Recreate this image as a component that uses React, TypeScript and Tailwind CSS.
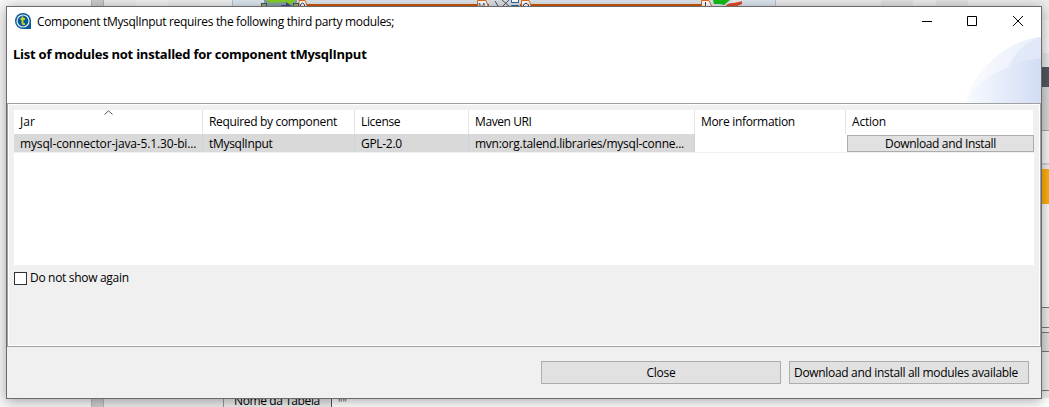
import type { ReactNode } from 'react';

function Backdrop() {
  return (
    <div className="absolute inset-0 flex bg-[#f3f3f3]">
      <div className="w-[91px] bg-[#f7f7f7]" />
      <div className="w-[13px] border-x border-[#b5b5b5] bg-[#cdcdcd]" />
      <div className="flex-1 bg-[#ececec]" />
      <svg className="absolute inset-0" width="1049" height="407" viewBox="0 0 1049 407" shapeRendering="crispEdges">
        <rect x="136" width="32" height="6" fill="#f1f1f1" />
        <rect x="200" width="32" height="6" fill="#f1f1f1" />
        <rect x="232" width="544" height="7" fill="#dde7ef" />
        <rect x="232" width="1" height="7" fill="#a9c4d8" />
        <rect x="775" width="1" height="7" fill="#b9c6d2" />
        <g shapeRendering="auto">
          <path d="M264 0H297V7H264Z" fill="#86a3ac" />
          <path d="M266 0H296L290 5L286 2L270 3Z" fill="#85cf24" />
          <path d="M281 5H286V2L293 7H281Z" fill="#494985" />
          <path d="M299 .5H305L307.500 7H299Z" fill="#fff" stroke="#df6d18" />
          <path d="M300.500 7V4.500Q302.500 1.500 304.500 4.500V7" fill="none" stroke="#333a66" />
        </g>
        <rect x="261.500" y="3.500" width="5" height="4" fill="#8bb27c" stroke="#555" />
        <rect x="293.500" y="3.500" width="5" height="4" fill="#8bb27c" stroke="#555" />
        <rect x="307" y="4" width="395" height="2" fill="#cf570b" />
        <g shapeRendering="auto">
          <rect x="489" width="31" height="7" fill="#d9e1e8" />
          <path d="M477.500 7V.5H486L488.500 7" fill="#fff" stroke="#df6d18" />
          <text x="478" y="8" fontSize="8" fill="#28365c" fontFamily="Open Sans, sans-serif">M</text>
          <path d="M495 1L498 6M502 0L510 7M509 0L502 7" stroke="#555" fill="none" />
          <path d="M511.500 0V2.500H518.500V0M511.500 7V5.500H518.500V7" stroke="#2d659d" fill="#fff" />
          <path d="M521.500 7V.5H529L531.500 7" fill="#fff" stroke="#df6d18" />
          <path d="M523.500 7V5Q526 1.500 528.500 5V7" fill="none" stroke="#333a66" />
          <path d="M701.500 7V.5H709L712 7" fill="#fff" stroke="#df6d18" />
          <path d="M705.500 2V7" stroke="#444" />
          <path d="M713 0H730L724 5L720 4L714 4Z" fill="#14bd18" />
          <path d="M725 7Q727 3 733 3L742 1V4Q738 6 733 7Z" fill="#e04a2f" />
          <path d="M733 0H742V1L733 3H729Z" fill="#eee" />
        </g>
        <rect x="881" width="32" height="6" fill="#e2e2e2" />
        <rect x="936" width="32" height="6" fill="#e2e2e2" />
        <rect x="1041" y="20" width="8" height="33" fill="#f3f3f3" />
        <rect x="1041" y="53" width="8" height="14" fill="#e7e7e7" />
        <rect x="1041" y="67" width="8" height="20" fill="#54575f" />
        <rect x="1041" y="87" width="8" height="43" fill="#d6d6d6" />
        <rect x="1041" y="130" width="8" height="1" fill="#aaa" />
        <rect x="1041" y="131" width="8" height="32" fill="#f5f5f5" />
        <rect x="1041" y="163" width="8" height="2" fill="#cbd0dc" />
        <rect x="1041" y="169" width="8" height="35" fill="#ffae0d" />
        <rect x="1041" y="204" width="8" height="103" fill="#f8f8f8" />
        <rect x="1041" y="307" width="8" height="1" fill="#777" />
        <rect x="1041" y="327" width="8" height="1" fill="#777" />
        <rect x="1041" y="332" width="8" height="1" fill="#777" />
        <rect x="1041" y="333" width="8" height="18" fill="#dedede" />
        <rect x="1041" y="351" width="8" height="1" fill="#777" />
        <rect x="1041" y="390" width="8" height="1" fill="#777" />
        <rect x="223" y="398" width="1" height="9" fill="#999" />
        <rect x="331" y="398" width="1" height="9" fill="#555" />
        <rect x="332" y="398" width="717" height="9" fill="#fff" />
      </svg>
      <div className="absolute left-[234px] top-[393px] h-[14px] whitespace-nowrap text-[12px] leading-4 tracking-[-0.4px]">Nome da Tabela</div>
      <div className="absolute left-[338px] top-[395px] h-3 text-[11px] leading-4 text-[#555]">""</div>
    </div>
  );
}

function TitleBar() {
  return (
    <div className="flex h-[29px] shrink-0 items-center bg-white pl-2">
      <svg width="16" height="16" viewBox="0 0 16 16" className="-mt-px">
        <path d="M8 0A8 8 0 0 1 16 8V16H8A8 8 0 0 1 8 0Z" fill="#075a97" />
        <circle cx="8" cy="8" r="6" fill="none" stroke="#e6eff5" strokeWidth="1.200" />
        <path d="M7.500 3.500V10Q7.500 11.500 10 11M5.500 6H10" stroke="#c6d420" strokeWidth="1.900" fill="none" />
      </svg>
      <span className="ml-[6px] whitespace-nowrap tracking-[-0.33px]">Component tMysqlInput requires the following third party modules;</span>
      <svg className="ml-auto mr-[17px]" width="103" height="29" viewBox="0 0 103 29" fill="none" stroke="#000">
        <path d="M1 14.500H11" />
        <path d="M46.500 9.500H55.500V18.500H46.500Z" />
        <path d="M92 9L102 19M102 9L92 19" />
      </svg>
    </div>
  );
}

function Banner() {
  return (
    <div className="flex h-[67px] shrink-0 justify-between bg-white pl-[6px]">
      <h1 className="mt-[10px] whitespace-nowrap text-[13px] font-bold leading-4 tracking-[-0.24px]">List of modules not installed for component tMysqlInput</h1>
      <svg width="76" height="67" viewBox="0 0 76 67">
        <defs>
          <linearGradient id="outer"><stop offset="0" stopColor="#fafbfe" /><stop offset="1" stopColor="#e9eefa" /></linearGradient>
          <linearGradient id="inner"><stop offset="0" stopColor="#f8faff" /><stop offset="1" stopColor="#d2ddf4" /></linearGradient>
        </defs>
        <path d="M1 67C4 42 38 4 76 1V67Z" fill="url(#outer)" />
        <path d="M42 33C49 18 59 6 76 1V30Z" fill="#dfe7f8" opacity=".8" />
        <path d="M1 67C8 48 36 28 76 22V67Z" fill="url(#inner)" />
      </svg>
    </div>
  );
}

function HeaderCell({ children, last = false }: { children: ReactNode; last?: boolean }) {
  return (
    <div className={`relative flex items-center whitespace-nowrap border-r pl-[6px] ${last ? 'border-[#f0f0f0]' : 'border-[#e5e5e5]'}`}>
      {children}
    </div>
  );
}

function Cell({ children }: { children: ReactNode }) {
  return <div className="flex items-center whitespace-nowrap border-r border-[#ccd3d9] bg-[#d9d9d9] pl-[6px] pt-px">{children}</div>;
}

function ModulesTable() {
  return (
    <div className="h-[155px] bg-white">
      <div className="grid h-6 grid-cols-[189px_152px_114px_226px_151px_188px]">
        <HeaderCell>
          <span>Jar</span>
          <svg className="absolute left-[90px] top-0" width="9" height="5" viewBox="0 0 9 5" fill="none" stroke="#555">
            <path d="M.5 4.500L4.500 .8L8.500 4.500" />
          </svg>
        </HeaderCell>
        <HeaderCell><span className="tracking-[-0.33px]">Required by component</span></HeaderCell>
        <HeaderCell><span className="tracking-[-0.35px]">License</span></HeaderCell>
        <HeaderCell><span className="tracking-[-0.4px]">Maven URI</span></HeaderCell>
        <HeaderCell><span className="tracking-[-0.32px]">More information</span></HeaderCell>
        <HeaderCell last><span className="tracking-[-0.2px]">Action</span></HeaderCell>
      </div>
      <div className="grid h-[19px] grid-cols-[189px_152px_114px_226px_151px_188px] border-b border-[#f0f0f0]">
        <Cell><span className="tracking-[-0.15px]">mysql-connector-java-5.1.30-bi...</span></Cell>
        <Cell><span className="tracking-[-0.3px]">tMysqlInput</span></Cell>
        <Cell><span className="tracking-[-0.3px]">GPL-2.0</span></Cell>
        <Cell><span className="tracking-[-0.25px]">mvn:org.talend.libraries/mysql-conne...</span></Cell>
        <div />
        <button className="ml-[1px] mt-px flex h-[17px] items-center justify-center whitespace-nowrap border border-[#adadad] bg-[#e1e1e1]">
          <span className="tracking-[-0.35px]">Download and Install</span>
        </button>
      </div>
    </div>
  );
}

export default function App() {
  return (
    <div className="relative h-[407px] w-[1049px] overflow-hidden font-['Open_Sans','Noto_Sans',sans-serif] text-[12px] leading-4 text-black">
      <Backdrop />
      <div className="absolute left-[6px] top-[6px] flex h-[393px] w-[1036px] flex-col border border-[#6b6b6b] bg-[#f0f0f0] shadow-[0_2px_12px_rgba(0,0,0,0.35)]">
        <TitleBar />
        <Banner />
        <div className="h-[244px] shrink-0 border border-[#a0a0a0]">
          <div className="h-full border border-white px-[5px] pt-[5px]">
            <ModulesTable />
            <label className="mt-[5px] flex h-4 items-center">
              <span className="size-[13px] border border-[#333] bg-white" />
              <span className="ml-[3px] whitespace-nowrap tracking-[-0.31px]">Do not show again</span>
            </label>
          </div>
        </div>
        <div className="flex justify-end gap-2 pr-3 pt-[14px]">
          <button className="h-[23px] w-[240px] border border-[#adadad] bg-[#e1e1e1]">
            <span className="tracking-[-0.3px]">Close</span>
          </button>
          <button className="h-[23px] w-[240px] whitespace-nowrap border border-[#adadad] bg-[#e1e1e1] pl-1 text-left">
            <span className="tracking-[-0.32px]">Download and install all modules available</span>
          </button>
        </div>
      </div>
    </div>
  );
}
